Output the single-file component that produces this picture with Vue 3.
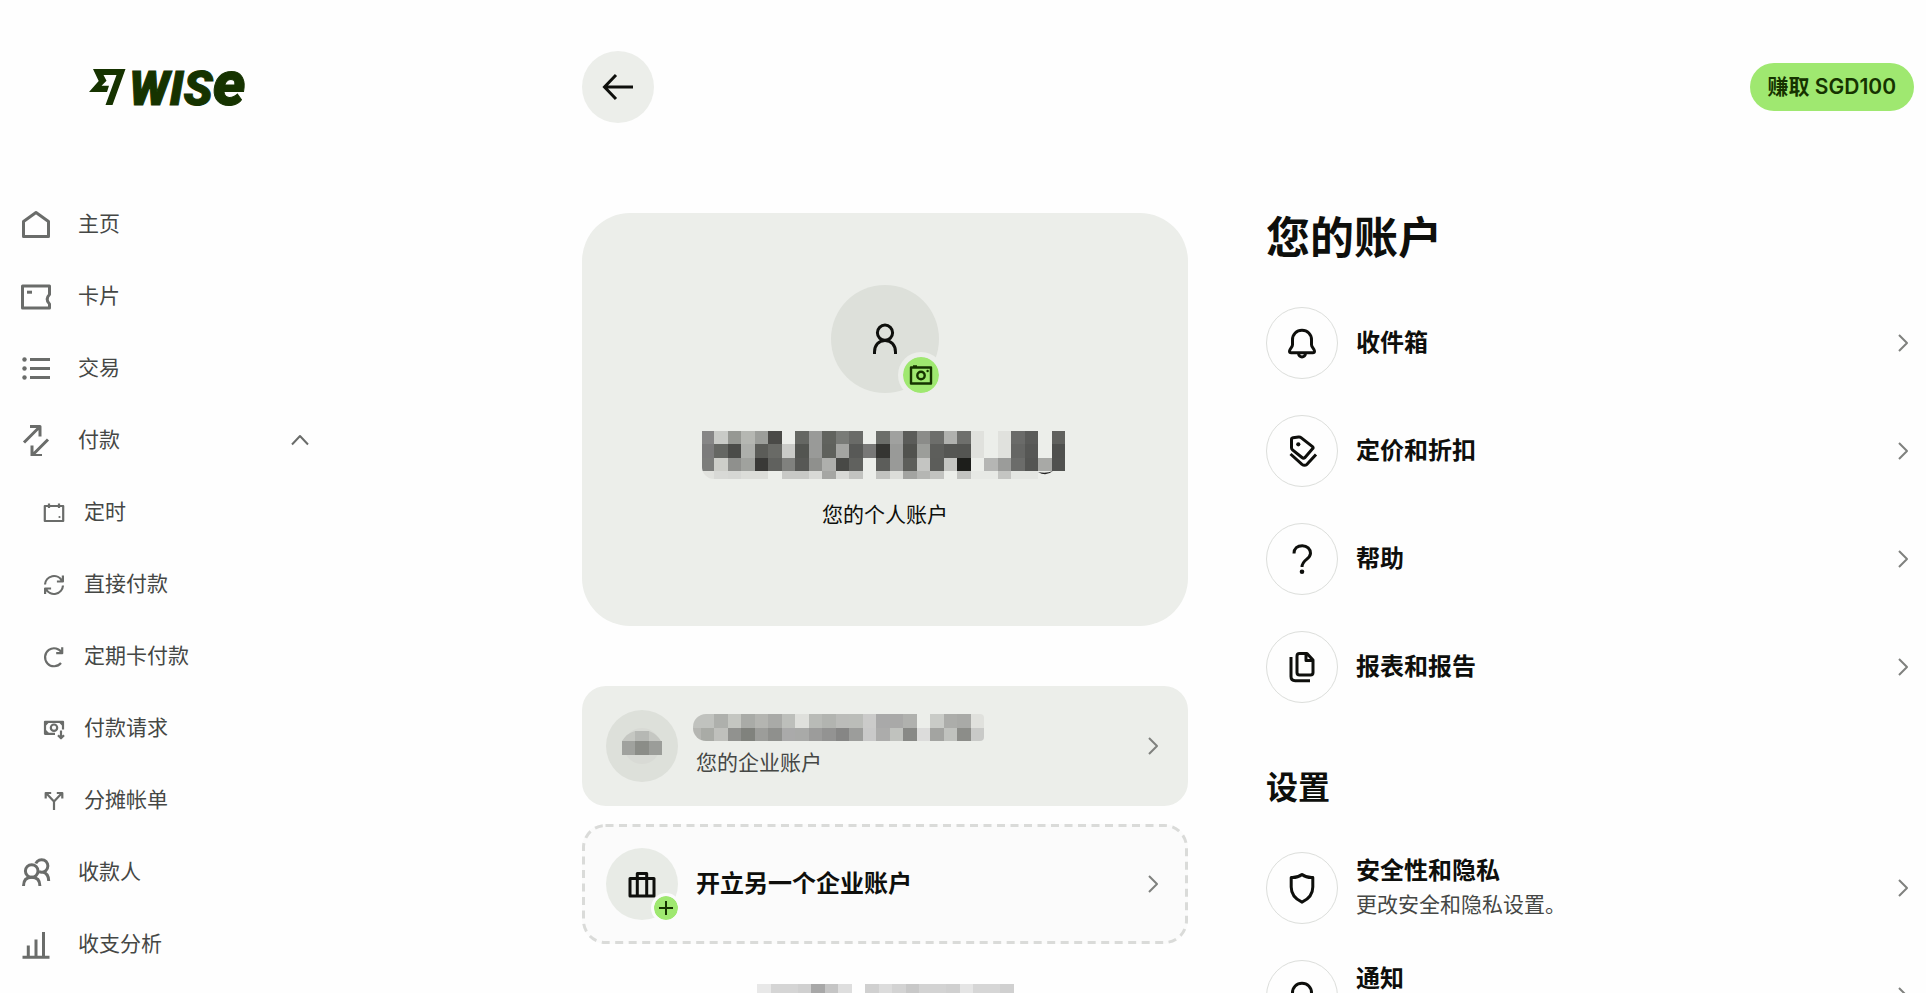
<script setup>
import { ref } from 'vue'

const paymentsOpen = ref(true)

const navTop = [
  { label: '主页', icon: '<path d="M2.5 12.5 15 3.5l12.500 9v15h-25z"/>' },
  { label: '卡片', icon: '<path d="M28.500 11.500V5h-27v22h27v-4c-3-3-3-6.500 0-9.500z"/><path d="M6 11.200h5"/>' },
  { label: '交易', icon: '<path d="M9 6.500h20M9 15.500h20M9 24.500h20"/><g class="solid"><circle cx="3.500" cy="6.500" r="2.200"/><circle cx="3.500" cy="15.500" r="2.200"/><circle cx="3.500" cy="24.500" r="2.200"/></g>' }
]
const paymentIcon = '<path d="M3 17.500 18.500 2M9 1.500h10v10M27 14.500 11.500 30M11 20.500v10h10"/>'
const navSub = [
  { label: '定时', icon: '<path d="M2.800 6h18.400v15H2.800zM7 3.500V8M17 3.500V8"/><circle class="solid" cx="17.500" cy="17" r="1.100"/>' },
  { label: '直接付款', icon: '<path d="M3 12.500a9 9 0 0 1 17-3.500M20.900 3.500v6h-6M21 13.500a9 9 0 0 1-17 3.500M3.100 22v-5.500h6"/>' },
  { label: '定期卡付款', icon: '<path d="M19 19A9 9 0 1 1 20 9M20.200 3.200v6h-6"/>' },
  { label: '付款请求', icon: '<path d="M21 13.500V5.800H3v12h10M19 14.500V22M16 19.300l3 3 3-3"/><circle cx="12" cy="11.700" r="3.200"/><path d="M3 9l3-3M21 9l-3-3M3 14.500l3 3"/>' },
  { label: '分摊帐单', icon: '<path d="M12 22v-9M12 13.500 4 5M12 13.500 20 5M3.700 10.500V5h5.500M20.300 10.500V5h-5.500"/>' }
]
const navBottom = [
  { label: '收款人', icon: '<circle cx="10.700" cy="14" r="6.300"/><path d="M2.500 29c0-6 3.300-8.700 8.200-8.700s8.200 2.700 8.200 8.700M14.800 6.500a6.300 6.300 0 1 1 3.200 8.200M21.500 15c3.800.8 6.200 3.800 6.200 9"/>' },
  { label: '收支分析', icon: '<path d="M1.500 28.200h27M7.300 28V16.500M15 28V10.500M22.500 28V3"/>' }
]

const bell = '<path d="M18 5.300c-5.500 0-9.500 4-9.500 9.500v5c0 2.500-3 4-3 6.300 0 1 .6 1.700 1.700 1.700h21.600c1.100 0 1.700-.7 1.700-1.700 0-2.300-3-3.800-3-6.300v-5c0-5.500-4-9.500-9.500-9.500z"/><path d="M14.600 28.500a3.400 3.400 0 0 0 6.800 0"/>'
const accountItems = [
  { label: '收件箱', icon: bell },
  { label: '定价和折扣', icon: '<path d="M7.500 6.500q0-1.500 1.500-1.800l5.500-.7q1.500-.2 2.500.6l11.500 9q1.200 1 .2 2L21 24.500q-1.500 1.200-3 0L8.500 16.800q-1-.8-1-2zM6.500 21l11.500 10.300q2.500 2 5 0L32 21.500"/><circle class="solid" cx="14.300" cy="11.300" r="2.100"/>' },
  { label: '帮助', icon: '<path d="M10 12.500c0-5 3.500-7.800 8.300-7.800s8.200 3.300 8.200 7.600C26.500 18.500 18 18.500 18 26"/><circle class="solid" cx="18" cy="30.800" r="2.300"/>' },
  { label: '报表和报告', icon: '<path d="M15.500 4.500h7.500l6 6.500v12.500q0 2.500-2.500 2.500h-11q-2.500 0-2.500-2.500v-16.500q0-2.500 2.500-2.500zM22 4.500V11.500h7M7 8v19.500q0 4.200 4.200 4.200H26"/>' }
]
const settingItems = [
  { label: '安全性和隐私', text: '更改安全和隐私设置。', icon: '<path d="M18 4.500c3 2.300 7 3.200 10.800 3v9.500c0 7-4 12-10.800 15.200C11.200 29 7.200 24 7.200 17V7.500c3.800.2 7.800-.7 10.800-3z"/>' },
  { label: '通知', icon: bell }
]

// Builds rectangles for a censored strip; '-' leaves a cell empty.
function cells(rows, size, first, heights) {
  const out = []
  let y = 0
  rows.forEach((row, r) => {
    row.split(' ').forEach((c, i) => {
      if (c === '-') return
      const x = i === 0 ? 0 : first + (i - 1) * size
      out.push({ x, y, w: i === 0 ? first : size, h: heights[r], fill: '#' + c })
    })
    y += heights[r]
  })
  return out
}
const nameCells = cells([
  '868686 c9cbc7 969893 b5b7b2 9c9e9a 4a4a47 - 656763 999a98 61635e 797b77 6a6b68 - 6c6e6a a0a19f 5b5c59 8b8c89 6d6e6b b0b1ae 6e6f6c e0e1dd - e0e1dd 6a6b69 5a5b59 - 60615e',
  '7b7b7b 656763 4b4c49 adafab 5b5c58 696a66 cacbc8 535551 999a98 5f615c a4a5a2 585957 787877 353532 999a98 51524e 9c9e9a 5d5e5b 555653 545552 e0e1dd - e0e1dd 656664 565755 - 4f504e',
  '7c7d7b cdcec9 8f908d a0a29e 393937 60615e 80817e 575855 8f908d aeafac 484946 60615e - 5c5d5a 999a98 5d5e5a c4c5c2 5c5d5a c4c5c2 1d1e1b - b5b6b4 9b9c9a 6b6c6a 545553 a8a9a6 50514f',
  'e1e2de d8d9d6 d6d7d4 dcddd9 dcddd9 - c8c9c6 c8c9c6 d8d9d6 a5a6a3 d8d9d6 c2c3c0 - c2c3c0 dcddd9 a3a4a1 b5b6b3 c2c3c0 - c2c3c0 e7e9e5 e7e9e5 c4c5c2 e4e6e2 e4e6e2'
], 13.5, 12, [13, 14, 13, 8])
const businessCells = cells([
  'c0c2be c0c2be aeb0ac c4c6c1 a9aba7 b4b5b1 a9aaa7 bdbfbb dfe0dc b9bbb7 b2b4b0 bbbcb9 bbbdb9 cbcbca a9a9a9 a9a9a8 b0b1ae - c9cbc7 acadaa a9aaa7 e0e1dd',
  'b5b6b2 a9aba6 bfc0bc 91928f 80827d 9c9d9a 8f908d aaaaaa a9aaa8 9c9c9b 939392 868685 9c9d9b c9c9c9 acacab c0c2be 888986 dcdcdb a3a4a1 c0c2be 8c8d89 c9cac8'
], 13.5, 7.5, [14, 13])
const footerCells = cells([
  'e8e8e8 d5d5d5 d5d5d5 d0d0d0 a8a8a8 c5c5c5 dedede - d0d0d0 dcdcdc d3d3d3 c8c8c8 d3d3d3 d3d3d3 d0d0d0 e5e5e5 d6d6d6 d6d6d6 d0d0d0'
], 13.5, 13.5, [10])
</script>

<template>
  <div class="shell">
    <aside class="sidebar">
      <a class="logo" href="#" aria-label="Wise">
        <svg class="flag" viewBox="0 0 38 36" aria-hidden="true">
          <path d="M4 0h32.500L23.500 36h-7L27.500 6H14.500l3 5.700-5 5h7.500L18 23H0l9.700-11z" />
        </svg>
        <span class="word"><span class="caps">wis</span><span class="tall">e</span></span>
      </a>
      <nav aria-label="主菜单">
        <ul>
          <li v-for="n in navTop" :key="n.label">
            <a class="nav" href="#"><svg class="icon" viewBox="-1 -1 32 32" aria-hidden="true" v-html="n.icon" />{{ n.label }}</a>
          </li>
          <li>
            <button class="nav" type="button" :aria-expanded="paymentsOpen" @click="paymentsOpen = !paymentsOpen">
              <svg class="icon" viewBox="-1 -1 32 32" aria-hidden="true" v-html="paymentIcon" />付款
              <svg class="caret" :class="{ shut: !paymentsOpen }" viewBox="0 0 24 24" aria-hidden="true"><path d="M4 16.500l8-8.500 8 8.500" /></svg>
            </button>
            <ul v-if="paymentsOpen">
              <li v-for="n in navSub" :key="n.label">
                <a class="nav sub" href="#"><svg class="icon" viewBox="0 0 24 24" aria-hidden="true" v-html="n.icon" />{{ n.label }}</a>
              </li>
            </ul>
          </li>
          <li v-for="n in navBottom" :key="n.label">
            <a class="nav" href="#"><svg class="icon" viewBox="-1 -1 32 32" aria-hidden="true" v-html="n.icon" />{{ n.label }}</a>
          </li>
        </ul>
      </nav>
    </aside>

    <div class="page">
      <header class="top">
        <button class="back" type="button" aria-label="返回">
          <svg viewBox="0 0 36 36" aria-hidden="true"><path d="M4.500 18H33M16 6 4.500 18 16 30" /></svg>
        </button>
        <button class="earn" type="button">赚取 SGD100</button>
      </header>

      <main class="columns">
        <section class="accounts">
          <div class="profile">
            <div class="avatar big">
              <svg class="person" viewBox="0 0 40 40" aria-hidden="true"><circle cx="20" cy="13.700" r="7.600" /><path d="M9.500 35v-2c0-6.500 4-11.500 10.500-11.500s10.500 5 10.500 11.500v2" /></svg>
              <button class="badge camera" type="button" aria-label="更换照片">
                <svg viewBox="0 0 24 24" aria-hidden="true"><path d="M2 4.500h20v16H2zM4 3.500h4" /><circle cx="12" cy="12.500" r="3.700" /><circle class="solid" cx="18.600" cy="8" r="1.200" /></svg>
              </button>
            </div>
            <svg class="name" viewBox="0 0 366 48" aria-hidden="true">
              <rect v-for="(c, i) in nameCells" :key="i" :x="c.x" :y="c.y" :width="c.w" :height="c.h" :fill="c.fill" />
              <path class="ink" d="M336 41q8 2 15-1-7 6-15 1z" />
            </svg>
            <p>您的个人账户</p>
          </div>

          <a class="account" href="#">
            <span class="avatar">
              <svg class="blot" viewBox="0 0 42 42" aria-hidden="true">
                <circle cx="21" cy="21" r="18" fill="#d8dad5" />
                <path fill="#c5c7c2" d="M1 16q5-8 13-10h14q8 3 12 10z" />
                <path fill="#b6b8b4" d="M14 6h14v10H14z" />
                <path fill="#a0a29e" d="M1 16h13v14H1z" />
                <path fill="#8b8d88" d="M14 16h14v14H14z" />
                <path fill="#9b9d99" d="M28 16h13v14H28z" />
              </svg>
            </span>
            <span class="label">
              <svg class="company" viewBox="0 0 291 27" aria-hidden="true">
                <rect v-for="(c, i) in businessCells" :key="i" :x="c.x" :y="c.y" :width="c.w" :height="c.h" :fill="c.fill" />
              </svg>
              <span class="note">您的企业账户</span>
            </span>
            <svg class="chevron" viewBox="0 0 24 24" aria-hidden="true"><path d="M9 4l8 8-8 8" /></svg>
          </a>

          <a class="account add" href="#">
            <svg class="outline" aria-hidden="true"><rect class="dashes" /></svg>
            <span class="avatar">
              <svg class="case" viewBox="0 0 30 30" aria-hidden="true"><path d="M3 9.500h24V27H3zM10.300 27V4.500h9.400V27" /></svg>
              <span class="badge plus"><svg viewBox="0 0 24 24" aria-hidden="true"><path d="M12 5v14M5 12h14" /></svg></span>
            </span>
            <strong class="label">开立另一个企业账户</strong>
            <svg class="chevron" viewBox="0 0 24 24" aria-hidden="true"><path d="M9 4l8 8-8 8" /></svg>
          </a>

          <svg class="membership" viewBox="0 0 257 10" aria-hidden="true">
            <rect v-for="(c, i) in footerCells" :key="i" :x="c.x" :y="c.y" :width="c.w" :height="c.h" :fill="c.fill" />
          </svg>
        </section>

        <section class="options">
          <h1>您的账户</h1>
          <ul>
            <li v-for="o in accountItems" :key="o.label">
              <a class="option" href="#">
                <span class="ring"><svg viewBox="0 0 36 36" aria-hidden="true" v-html="o.icon" /></span>
                <strong class="body">{{ o.label }}</strong>
                <svg class="chevron" viewBox="0 0 24 24" aria-hidden="true"><path d="M9 4l8 8-8 8" /></svg>
              </a>
            </li>
          </ul>
          <h2>设置</h2>
          <ul>
            <li v-for="o in settingItems" :key="o.label">
              <a class="option" href="#">
                <span class="ring"><svg viewBox="0 0 36 36" aria-hidden="true" v-html="o.icon" /></span>
                <span class="body detailed"><strong>{{ o.label }}</strong><span v-if="o.text" class="note">{{ o.text }}</span></span>
                <svg class="chevron" viewBox="0 0 24 24" aria-hidden="true"><path d="M9 4l8 8-8 8" /></svg>
              </a>
            </li>
          </ul>
        </section>
      </main>
    </div>
  </div>
</template>

<style>
body {
  margin: 0;
  background: #fefefe;
}
</style>

<style scoped>
.shell {
  display: grid;
  grid-template-columns: 336px 1fr;
  column-gap: 246px;
  height: 100vh;
  overflow: hidden;
  color: #0e0f0c;
  font-family: Inter, "Noto Sans CJK SC", sans-serif;
  font-size: 21px;
  line-height: 32px;
}
ul {
  list-style: none;
  margin: 0;
  padding: 0;
}
a {
  color: inherit;
  text-decoration: none;
}
button {
  border: 0;
  padding: 0;
  font: inherit;
  cursor: pointer;
}
svg {
  display: block;
  flex: none;
  fill: none;
  stroke: currentColor;
  stroke-width: 3;
  stroke-linejoin: round;
}
svg :deep(.solid) {
  fill: currentColor;
  stroke: none;
}
rect {
  stroke: none;
  shape-rendering: crispEdges;
}

.logo {
  display: flex;
  align-items: flex-start;
  gap: 2px;
  height: 36px;
  padding: 69px 0 83px 89px;
  color: #163300;
}
.flag {
  width: 38px;
  height: 36px;
  fill: currentColor;
  stroke: none;
}
.word {
  display: flex;
  align-items: baseline;
  font-family: Roboto, sans-serif;
  font-weight: 900;
  font-style: italic;
  line-height: 30px;
  -webkit-text-stroke: 1px currentColor;
}
.caps {
  font-size: 48px;
  text-transform: uppercase;
}
.tall {
  font-size: 62px;
}

.nav {
  display: flex;
  align-items: center;
  gap: 26px;
  box-sizing: border-box;
  width: 100%;
  height: 72px;
  padding: 0 24px 0 20px;
  background: none;
  color: #454745;
  text-align: left;
}
.nav .icon {
  width: 32px;
  height: 32px;
  color: #6a6c6a;
  stroke-width: 3;
}
.nav.sub {
  gap: 18px;
  padding-left: 42px;
}
.nav.sub .icon {
  width: 24px;
  height: 24px;
  stroke-width: 2.2;
}
.caret {
  width: 24px;
  height: 24px;
  margin-left: auto;
  color: #6a6c6a;
  stroke-width: 2;
}
.caret.shut {
  transform: rotate(180deg);
}

.page {
  padding: 51px 12px 0 0;
}
.top {
  display: flex;
  align-items: center;
  justify-content: space-between;
  margin-bottom: 90px;
}
.back {
  display: grid;
  place-items: center;
  width: 72px;
  height: 72px;
  border-radius: 50%;
  background: #eceeea;
  color: #0e0f0c;
}
.back svg {
  width: 36px;
  height: 36px;
  stroke-linejoin: miter;
}
.earn {
  height: 48px;
  padding: 0 18px;
  border-radius: 24px;
  background: #9fe870;
  color: #163300;
  font-weight: 600;
}

.columns {
  display: grid;
  grid-template-columns: 606fr 648fr;
  column-gap: 78px;
}
.profile {
  display: flex;
  flex-direction: column;
  align-items: center;
  padding: 72px 24px 95px;
  border-radius: 48px;
  background: #eceeea;
}
.profile p {
  margin: 20px 0 0;
}
.name {
  width: 366px;
  height: 48px;
  margin-top: 38px;
  border-bottom-left-radius: 12px;
}
.name .ink {
  fill: #222;
  stroke: none;
}
.avatar {
  position: relative;
  display: grid;
  place-items: center;
  flex: none;
  width: 72px;
  height: 72px;
  border-radius: 50%;
  background: #dde0da;
}
.avatar.big {
  width: 108px;
  height: 108px;
}
.person {
  width: 40px;
  height: 40px;
}
.badge {
  position: absolute;
  display: grid;
  place-items: center;
  box-sizing: content-box;
  border-radius: 50%;
  background: #9fe870;
  background-clip: padding-box;
  color: #163300;
}
.badge svg {
  stroke-width: 2;
}
.camera {
  right: -5px;
  bottom: -5px;
  width: 36px;
  height: 36px;
  border: 5px solid #eceeea;
}
.camera svg {
  width: 24px;
  height: 24px;
  stroke-width: 2.4;
}
.plus {
  right: -3px;
  bottom: -3px;
  width: 24px;
  height: 24px;
  border: 3px solid #fbfbfb;
}
.plus svg {
  width: 24px;
  height: 24px;
}
.account {
  display: flex;
  align-items: center;
  gap: 18px;
  box-sizing: border-box;
  height: 120px;
  margin-top: 60px;
  padding: 0 24px;
  border-radius: 24px;
  background: #eceeea;
}
.account.add {
  position: relative;
  margin-top: 18px;
  background: #fbfbfb;
}
.outline {
  position: absolute;
  inset: 0;
  width: 100%;
  height: 100%;
}
.dashes {
  x: 1.5px;
  y: 1.5px;
  width: calc(100% - 3px);
  height: calc(100% - 3px);
  rx: 22px;
  stroke: #dadbd9;
  stroke-width: 3;
  stroke-dasharray: 8 5.5;
  shape-rendering: auto;
}
.add .avatar {
  background: #e8ebe6;
}
.case {
  width: 30px;
  height: 30px;
}
.blot {
  width: 42px;
  height: 42px;
  stroke: none;
}
.company {
  width: 291px;
  height: 27px;
  margin: 0 0 6px -3px;
  border-radius: 13px 4px 4px 13px;
}
.label {
  flex: 1;
}
strong {
  font-size: 24px;
  font-weight: 600;
}
.note {
  color: #454745;
}
.chevron {
  width: 24px;
  height: 24px;
  color: #7f817e;
  stroke-width: 2;
}
.membership {
  width: 257px;
  height: 10px;
  margin: 40px auto 0;
}

h1,
h2 {
  margin: 0 0 26px;
  font-weight: 600;
}
h1 {
  font-size: 44px;
  line-height: 50px;
}
h2 {
  margin-top: 47px;
  font-size: 32px;
  line-height: 40px;
}
.option {
  display: flex;
  align-items: center;
  gap: 18px;
  height: 108px;
}
.ring {
  display: grid;
  place-items: center;
  box-sizing: border-box;
  width: 72px;
  height: 72px;
  border: 1px solid #dcdedb;
  border-radius: 50%;
}
.ring svg {
  width: 36px;
  height: 36px;
}
.body {
  flex: 1;
}
.detailed {
  display: flex;
  flex-direction: column;
  min-height: 66px;
  gap: 2px;
}
</style>
